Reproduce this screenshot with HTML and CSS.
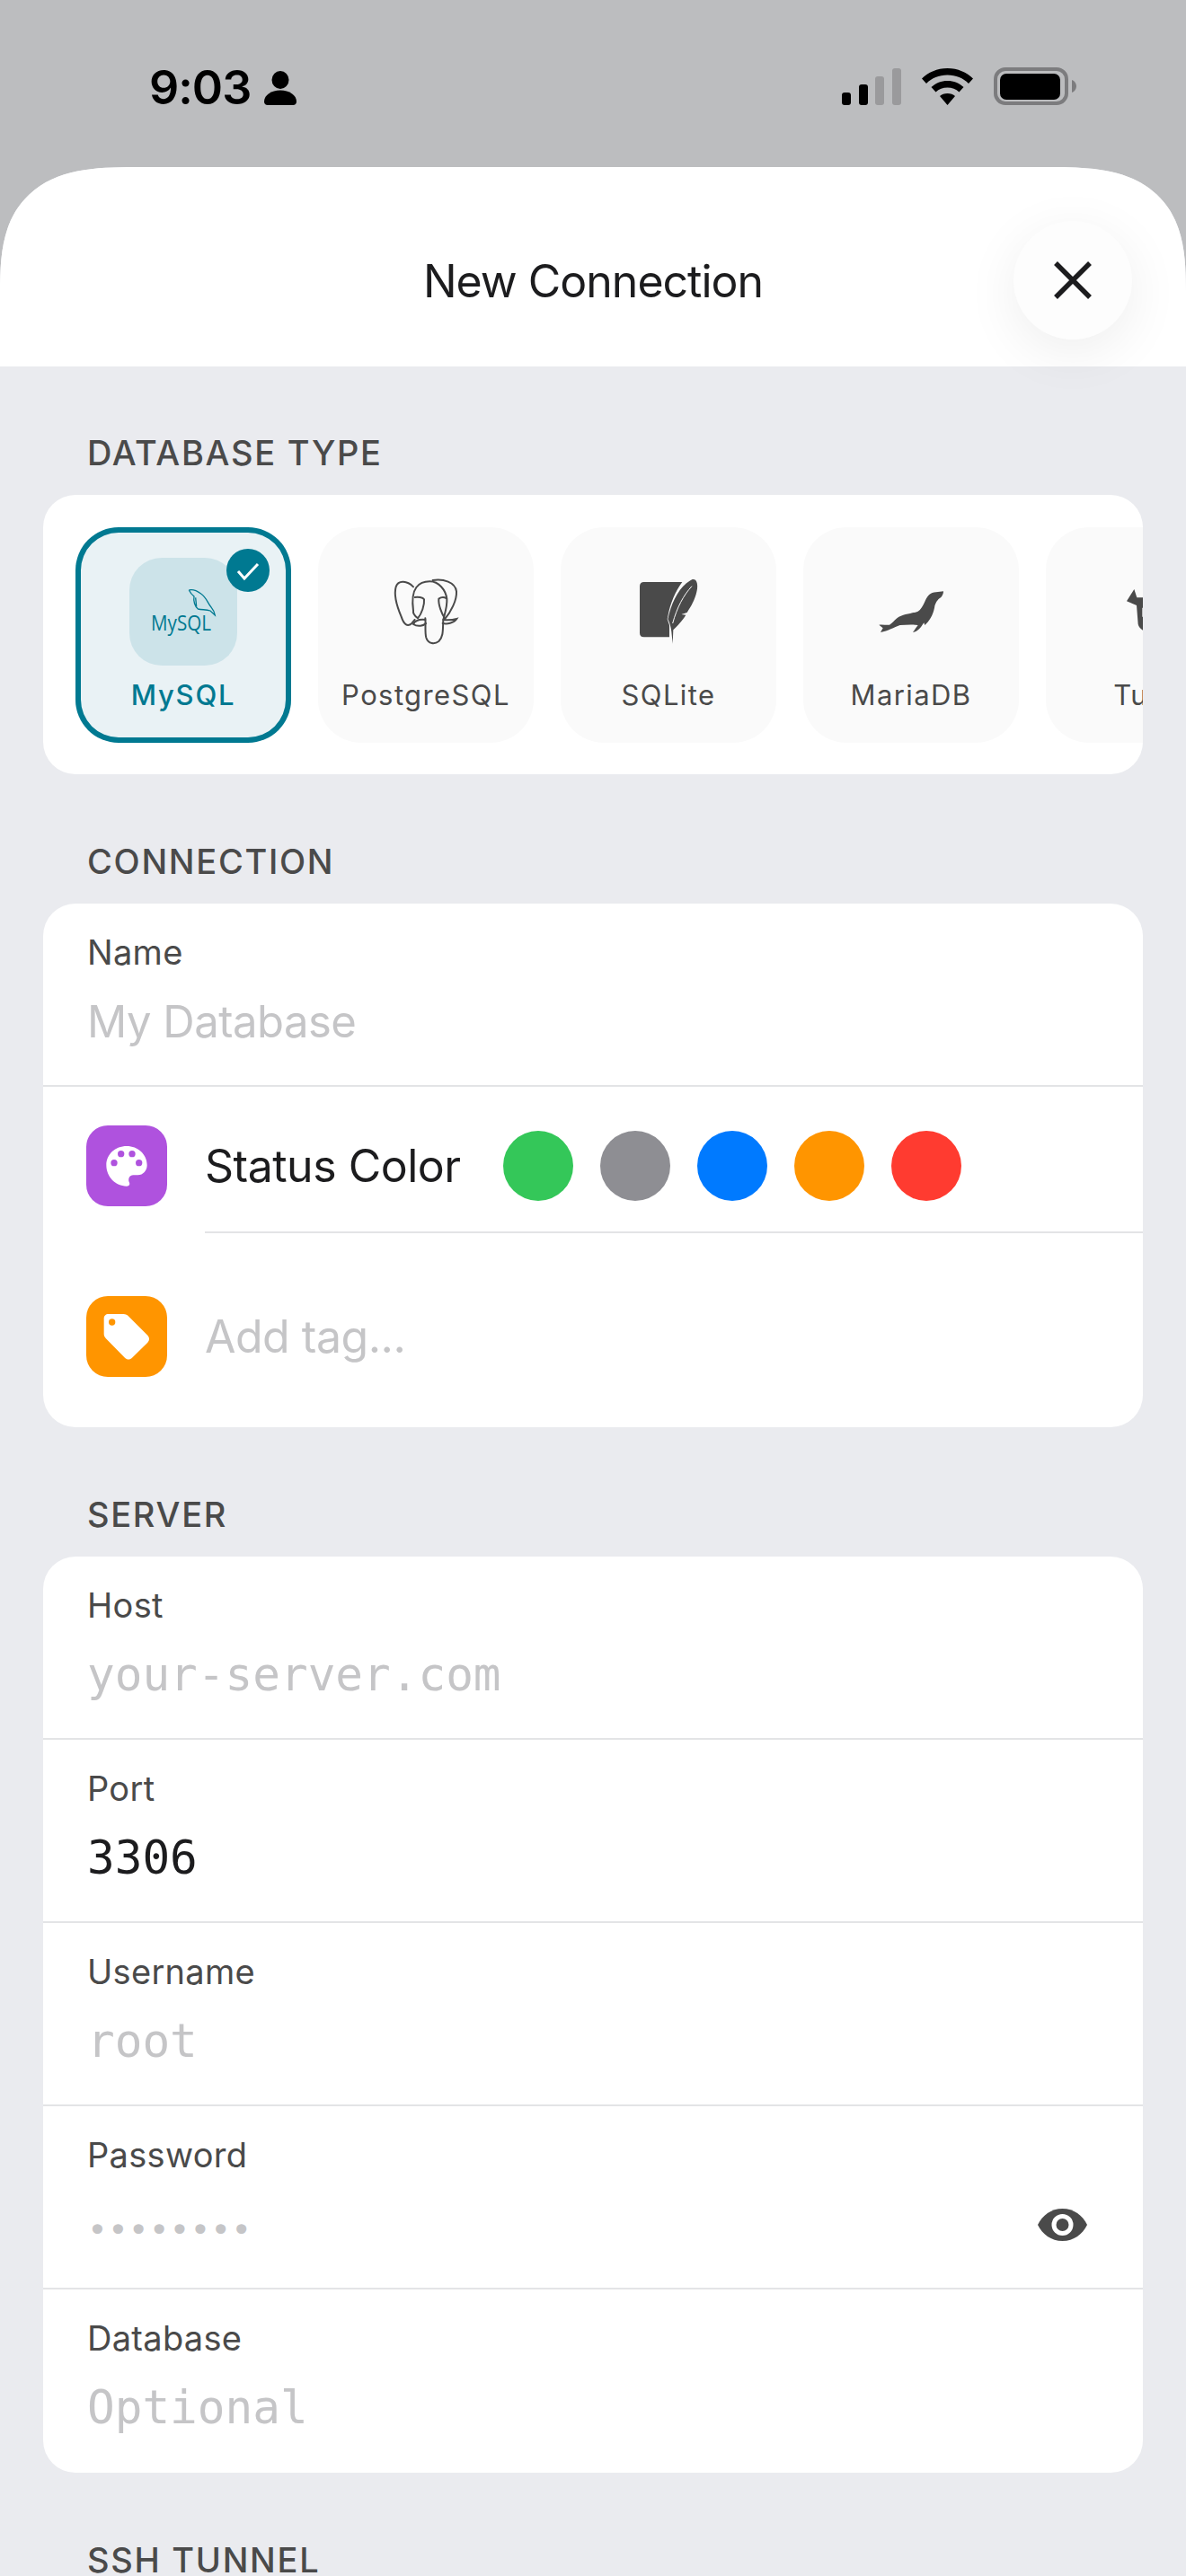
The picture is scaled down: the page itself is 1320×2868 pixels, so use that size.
FILE: index.html
```html
<!doctype html>
<html>
  <head>
    <meta name="viewport" content="width=device-width, initial-scale=1.0" />
    <title>New Connection</title>
    <link rel="stylesheet" href="styles.css">
  </head>
  <body>
    <div class="status-bar">
      <div class="status-left">
        <span class="time">9:03</span>
        <svg class="person" viewBox="0 0 36 38"><ellipse cx="18" cy="10" rx="9.5" ry="10" /><path d="M0 34C0 27 8 21.5 18 21.5S36 27 36 34C36 36.500 34.500 38 32 38H4C1.500 38 0 36.500 0 34Z" /></svg>
      </div>
      <div class="status-right">
        <svg class="signal" viewBox="0 0 66 41">
          <rect x="0" y="27" width="10" height="14" rx="3" fill="#000" />
          <rect x="19" y="18" width="10" height="23" rx="3" fill="#000" />
          <rect x="37" y="9" width="10" height="32" rx="3" fill="#9a9a9c" />
          <rect x="56" y="0" width="10" height="41" rx="3" fill="#9a9a9c" />
        </svg>
        <svg class="wifi" viewBox="0 0 57 41">
          <path d="M28.500 0C17 0 7 4.500 0 11.500L5 17C11 11 19 7.500 28.500 7.500C38 7.500 46 11 52 17L57 11.500C50 4.500 40 0 28.500 0Z" />
          <path d="M28.500 14C21.500 14 15.500 16.500 10.500 21L15.500 26.500C19 23.300 23.500 21.500 28.500 21.500C33.500 21.500 38 23.300 41.500 26.500L46.500 21C41.500 16.500 35.500 14 28.500 14Z" />
          <path d="M28.500 28C25 28 22 29.200 20 31L28.500 41L37 31C35 29.200 32 28 28.500 28Z" />
        </svg>
        <svg class="battery" viewBox="0 0 92 42">
          <rect x="2" y="2" width="79" height="38" rx="11" fill="none" stroke="#7c7c7e" stroke-width="4" />
          <rect x="7" y="7" width="67" height="29" rx="7" fill="#000" />
          <path d="M87 14C90 15 92 18 92 21S90 27 87 28Z" fill="#7c7c7e" />
        </svg>
      </div>
    </div>

    <div class="sheet">
      <div class="sheet-header">
        <h1>New Connection</h1>
        <div class="close-btn">
          <svg viewBox="0 0 42 42"><path d="M2 2L40 40M40 2L2 40" /></svg>
        </div>
      </div>

      <div class="form">
        <div class="section-label">DATABASE TYPE</div>
        <div class="card db-types">
          <div class="db-type selected">
            <div class="db-logo mysql-logo">
              <svg viewBox="72 93 360 360">
                <path class="dolphin" d="M271 201C285 197 300 205 311 213C330 226 334 246 345 258C350 264 356 271 358 285L342 270C328 264 315 268 301 264C291 256 285 238 288 222C280 216 275 209 271 201M293 226L296 256" />
                <text class="mysql-word" x="144" y="336" textLength="201" lengthAdjust="spacingAndGlyphs">MySQL</text>
              </svg>
            </div>
            <div class="check-badge">
              <svg viewBox="0 0 48 48"><path d="M13 25L20 33L35 17" /></svg>
            </div>
            <div class="db-name">MySQL</div>
          </div>

          <div class="db-type">
            <div class="db-logo">
              <svg class="line-logo" viewBox="12 3 360 360">
                <path d="M150 100C130 80 100 76 92 100C85 125 95 165 110 200C118 225 130 235 145 222L155 210" />
                <path d="M150 180C146 150 148 118 160 102C172 86 190 82 205 82C235 82 258 110 262 140C264 165 255 190 250 210C248 240 252 265 235 282C222 292 200 292 193 270C188 250 192 225 190 205" />
                <path d="M155 135C165 133 182 135 186 142C188 160 178 190 165 205C156 198 148 188 150 180" />
                <path d="M235 140C242 135 252 134 260 138M235 140C233 160 245 190 255 205" />
                <path d="M215 78C250 72 290 85 294 115C296 145 275 185 255 208" />
                <path d="M250 210C265 212 280 211 295 207C285 222 262 225 248 222" />
                <path d="M190 210C170 208 155 215 150 225C165 235 185 230 192 222" />
              </svg>
            </div>
            <div class="db-name">PostgreSQL</div>
          </div>

          <div class="db-type">
            <div class="db-logo">
              <svg class="fill-logo" viewBox="-18 3 360 360">
                <path d="M80 84H208C185 115 168 155 160 198L158 208L165 228V268H80C71 268 66 263 66 254V98C66 89 71 84 80 84Z" />
                <path d="M242 75C260 72 262 100 254 125C245 155 232 172 224 186L205 192L220 194C210 212 190 232 178 244L176 290L172 250C170 232 165 218 160 208C172 150 200 95 242 75Z" />
                <path class="vein" d="M240 98C212 128 190 170 176 222" />
              </svg>
            </div>
            <div class="db-name">SQLite</div>
          </div>

          <div class="db-type">
            <div class="db-logo">
              <svg class="fill-logo" viewBox="-18 -27 360 360">
                <path d="M270 85C255 88 235 85 222 97C205 115 205 140 185 152C165 160 135 160 115 175C105 182 100 192 90 197C78 198 65 195 55 197L68 208L60 222C85 218 105 205 125 198C145 197 165 195 185 198C180 205 175 212 168 222C185 220 195 205 205 190L208 198C222 185 235 165 240 140C242 125 250 112 262 105C268 98 270 92 270 85Z" />
              </svg>
            </div>
            <div class="db-name">MariaDB</div>
          </div>

          <div class="db-type">
            <div class="db-logo">
              <svg class="fill-logo" viewBox="192 123 360 360">
                <path fill-rule="evenodd" d="M307 228L316 256H428L437 228L462 268L429 282L424 345C420 362 400 372 372 378C344 372 324 362 320 345L315 282L282 268ZM334 290V320L360 326V296Z" />
              </svg>
            </div>
            <div class="db-name">Turso</div>
          </div>
        </div>

        <div class="section-label">CONNECTION</div>
        <div class="card">
          <div class="field">
            <div class="field-label">Name</div>
            <div class="field-value sans placeholder">My Database</div>
          </div>
          <div class="icon-row status-row">
            <div class="row-icon purple">
              <svg viewBox="48 39 270 270">
                <path fill="#fff" d="M183 108C145 108 115 135 115 172C115 210 145 242 183 242C192 242 195 235 191 228C187 218 192 205 205 205H220C238 205 251 190 251 172C251 135 220 108 183 108Z" />
                <circle cx="141" cy="164" r="11" />
                <circle cx="164" cy="134" r="11" />
                <circle cx="201" cy="134" r="11" />
                <circle cx="224" cy="164" r="11" />
              </svg>
            </div>
            <div class="icon-row-body">
              <span class="row-title">Status Color</span>
              <div class="swatches">
                <div class="swatch green"></div>
                <div class="swatch gray"></div>
                <div class="swatch blue"></div>
                <div class="swatch orange"></div>
                <div class="swatch red"></div>
              </div>
            </div>
          </div>
          <div class="icon-row tag-row">
            <div class="row-icon orange">
              <svg viewBox="48 609 270 270">
                <path fill="#fff" d="M122 669H172C180 669 185 672 190 677L253 740C260 747 260 757 253 764L201 815C194 822 184 822 177 815L113 750C109 745 107 742 107 735V684C107 675 113 669 122 669Z" />
                <circle cx="134" cy="696" r="11" />
              </svg>
            </div>
            <div class="icon-row-body">
              <span class="row-title placeholder">Add tag...</span>
            </div>
          </div>
        </div>

        <div class="section-label">SERVER</div>
        <div class="card">
          <div class="field">
            <div class="field-label">Host</div>
            <div class="field-value placeholder">your-server.com</div>
          </div>
          <div class="field">
            <div class="field-label">Port</div>
            <div class="field-value">3306</div>
          </div>
          <div class="field">
            <div class="field-label">Username</div>
            <div class="field-value placeholder">root</div>
          </div>
          <div class="field">
            <div class="field-label">Password</div>
            <div class="field-value password placeholder">
              <span class="dots">••••••••</span>
              <svg class="eye" viewBox="0 0 55 36">
                <path d="M27.500 0C15 0 5 7.500 0 18C5 28.500 15 36 27.500 36C40 36 50 28.500 55 18C50 7.500 40 0 27.500 0Z" fill="#4a4a4a" />
                <circle cx="27.500" cy="18" r="12" fill="#fff" />
                <circle cx="27.500" cy="18" r="7" fill="#4a4a4a" />
              </svg>
            </div>
          </div>
          <div class="field">
            <div class="field-label">Database</div>
            <div class="field-value placeholder">Optional</div>
          </div>
        </div>

        <div class="section-label">SSH TUNNEL</div>
      </div>
    </div>
  </body>
</html>
```

FILE: styles.css
```css
html,
body {
  margin: 0;
  width: 1320px;
  height: 2868px;
  overflow: hidden;
  background: #bcbdbf;
  color: #1c1c1e;
  font-family: 'Inter', 'Liberation Sans', sans-serif;
}

/* Status bar */

.status-bar {
  height: 186px;
  box-sizing: border-box;
  padding: 75px 122px 0 166px;
  display: flex;
  justify-content: space-between;
  align-items: flex-start;
}

.status-left {
  display: flex;
  align-items: flex-start;
  gap: 15px;
  margin-top: 4px;
}

.status-right {
  display: flex;
  align-items: flex-start;
  gap: 23px;
}

.time {
  font-size: 52px;
  line-height: 38px;
  font-weight: 600;
  letter-spacing: -1px;
  color: #000;
}

.person {
  width: 36px;
  height: 38px;
}

.signal {
  width: 66px;
  height: 41px;
  margin-top: 1px;
}

.wifi {
  width: 57px;
  height: 41px;
  margin-top: 1px;
}

.battery {
  width: 92px;
  height: 42px;
}

/* Sheet */

.sheet {
  height: 2682px;
  overflow: hidden;
  background: #eaebef;
  border-radius: 150px 150px 0 0 / 140px 140px 0 0;
  corner-shape: superellipse(1.5);
}

.sheet-header {
  position: relative;
  height: 222px;
  box-sizing: border-box;
  padding-top: 32px;
  background: #fff;
  display: flex;
  justify-content: center;
  align-items: center;
}

h1 {
  margin: 0;
  font-size: 50px;
  font-weight: 400;
  letter-spacing: -1px;
}

.close-btn {
  position: absolute;
  top: 60px;
  right: 60px;
  width: 132px;
  height: 132px;
  border-radius: 50%;
  background: #fdfdfd;
  box-shadow: 0 14px 60px rgba(0, 0, 0, 0.07);
  display: flex;
  justify-content: center;
  align-items: center;
}

.close-btn svg {
  width: 42px;
  height: 42px;
  fill: none;
  stroke: #1c1c1e;
  stroke-width: 5.500;
}

/* Form */

.form {
  padding: 72px 48px 0;
}

.section-label {
  padding-left: 49px;
  margin-bottom: 23px;
  font-size: 38px;
  line-height: 48px;
  font-weight: 500;
  letter-spacing: 1.700px;
  color: #4a4a4a;
}

.card {
  margin-bottom: 73px;
  background: #fff;
  border-radius: 36px;
  overflow: hidden;
}

/* Database types */

.db-types {
  display: flex;
  gap: 30px;
  padding: 36px 0 35px 36px;
}

.db-type {
  position: relative;
  flex: none;
  width: 240px;
  height: 240px;
  box-sizing: border-box;
  padding-top: 34px;
  background: #fafafa;
  border-radius: 48px;
  display: flex;
  flex-direction: column;
  align-items: center;
}

.db-type.selected {
  background: #e9f2f5;
  box-shadow: inset 0 0 0 6px #007991;
}

.db-logo {
  width: 120px;
  height: 120px;
  border-radius: 36px;
}

.db-logo svg {
  display: block;
  width: 120px;
  height: 120px;
}

.mysql-logo {
  background: #cce3e9;
}

.dolphin {
  fill: none;
  stroke: #007991;
  stroke-width: 4;
}

.mysql-word {
  font-family: 'Open Sans', sans-serif;
  font-size: 72px;
  font-weight: 500;
  fill: #007991;
}

.line-logo path {
  fill: none;
  stroke: #4a4a4a;
  stroke-width: 6;
  stroke-linecap: round;
}

.fill-logo path {
  fill: #4a4a4a;
}

.fill-logo .vein {
  fill: none;
  stroke: #fafafa;
  stroke-width: 3;
}

.check-badge {
  position: absolute;
  top: 24px;
  left: 168px;
  width: 48px;
  height: 48px;
  border-radius: 50%;
  background: #007991;
}

.check-badge svg {
  display: block;
  fill: none;
  stroke: #fff;
  stroke-width: 3;
}

.db-name {
  margin-top: 13px;
  font-size: 31px;
  line-height: 40px;
  letter-spacing: 1.400px;
  color: #4a4a4a;
  white-space: nowrap;
}

.selected .db-name {
  font-weight: 500;
  letter-spacing: 1.800px;
  color: #007991;
}

/* Rows */

.field {
  height: 204px;
  box-sizing: border-box;
  padding: 30px 49px 0;
  border-bottom: 2px solid #e3e4e6;
}

.field:last-child {
  border-bottom: 0;
}

.field-label {
  font-size: 38px;
  line-height: 48px;
  letter-spacing: 0.300px;
  color: #4a4a4a;
}

.field-value {
  margin-top: 24px;
  font-family: 'DejaVu Sans Mono', monospace;
  font-size: 51px;
  line-height: 60px;
  color: #1c1c1e;
}

.field-value.sans {
  font-family: 'Inter', sans-serif;
  font-size: 49px;
  letter-spacing: -0.500px;
}

.field-value.placeholder,
.row-title.placeholder {
  color: #c5c5c7;
}

.password {
  display: flex;
  justify-content: space-between;
  align-items: center;
  font-size: 38px;
  padding-right: 13px;
}

.dots {
  margin-top: 6px;
  margin-bottom: -6px;
}

.eye {
  width: 55px;
  height: 36px;
}

.icon-row {
  display: flex;
  gap: 42px;
  padding-left: 48px;
}

.row-icon {
  flex: none;
  width: 90px;
  height: 90px;
  border-radius: 24px;
}

.row-icon svg {
  display: block;
  width: 90px;
  height: 90px;
}

.row-icon.purple {
  background: #af52de;
  fill: #af52de;
}

.row-icon.orange {
  background: #ff9500;
  fill: #ff9500;
}

.icon-row-body {
  flex: 1;
  display: flex;
  align-items: center;
  gap: 47px;
  height: 90px;
}

.status-row {
  padding-top: 43px;
}

.status-row .icon-row-body {
  padding-bottom: 28px;
  border-bottom: 2px solid #e3e4e6;
}

.tag-row {
  padding-top: 70px;
  padding-bottom: 56px;
}

.row-title {
  font-size: 50px;
  line-height: 60px;
  letter-spacing: -0.500px;
}

.swatches {
  display: flex;
  gap: 30px;
}

.swatch {
  width: 78px;
  height: 78px;
  border-radius: 50%;
}

.swatch.green { background: #34c759; }
.swatch.gray { background: #8e8e93; }
.swatch.blue { background: #007aff; }
.swatch.orange { background: #ff9500; }
.swatch.red { background: #ff3b30; }
```
